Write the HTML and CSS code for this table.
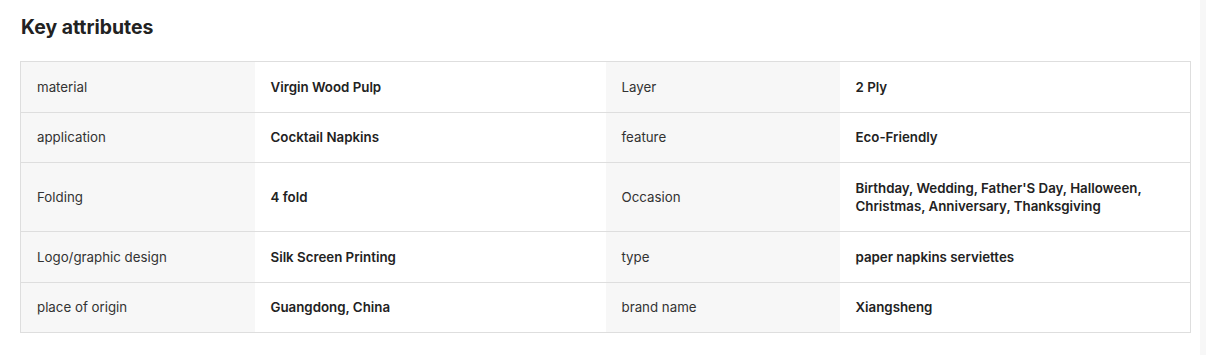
FILE: index.html
```html
<!DOCTYPE html>
<html>
<head>
<meta charset="utf-8">
<link rel="stylesheet" href="styles.css">
</head>
<body>
<div class="page">
  <main class="main">
    <h2 class="title">Key attributes</h2>
    <table class="attrs">
      <colgroup>
        <col class="c-label"><col class="c-value"><col class="c-label"><col class="c-value">
      </colgroup>
      <tr>
        <td class="label">material</td><td class="value">Virgin Wood Pulp</td>
        <td class="label">Layer</td><td class="value">2 Ply</td>
      </tr>
      <tr>
        <td class="label">application</td><td class="value">Cocktail Napkins</td>
        <td class="label">feature</td><td class="value">Eco-Friendly</td>
      </tr>
      <tr>
        <td class="label">Folding</td><td class="value">4 fold</td>
        <td class="label">Occasion</td><td class="value">Birthday, Wedding, Father'S Day, Halloween, Christmas, Anniversary, Thanksgiving</td>
      </tr>
      <tr>
        <td class="label">Logo/graphic design</td><td class="value">Silk Screen Printing</td>
        <td class="label">type</td><td class="value">paper napkins serviettes</td>
      </tr>
      <tr>
        <td class="label">place of origin</td><td class="value">Guangdong, China</td>
        <td class="label">brand name</td><td class="value">Xiangsheng</td>
      </tr>
    </table>
  </main>
  <div class="strip"></div>
</div>
</body>
</html>
```

FILE: styles.css
```css
* { box-sizing: border-box; }
html, body { margin: 0; padding: 0; background: #fff; }
body {
  font-family: Inter, "Noto Sans", "Liberation Sans", sans-serif;
  color: #222;
  width: 1206px;
  height: 355px;
  overflow: hidden;
}
.page {
  display: flex;
  height: 355px;
}
.main {
  width: 1200px;
  padding: 15px 9px 0 20px;
}
.strip {
  width: 6px;
  background: #f7f7f7;
}
.title {
  margin: 0 0 22px 1px;
  font-size: 19.4px;
  line-height: 24px;
  font-weight: 700;
  color: #222;
}
.attrs {
  width: 1171px;
  border-collapse: collapse;
  table-layout: fixed;
  border: 1px solid #dedede;
}
.c-label { width: 20%; }
.c-value { width: 30%; }
.attrs tr { border-bottom: 1px solid #dedede; }
.attrs td {
  padding: 15.6px 16px;
  font-size: 13.3px;
  line-height: 18.4px;
  vertical-align: middle;
}
.label {
  background: #f7f7f7;
  color: #333;
  font-weight: 400;
}
.value {
  background: #fff;
  color: #222;
  font-weight: 600;
}
```
